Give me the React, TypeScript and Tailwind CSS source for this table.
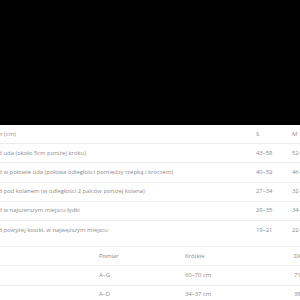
const sizeRows = [
  { label: "Obwód uda (około 5cm poniżej kroku)", s: "43–58", m: "52–64" },
  { label: "Obwód w połowie uda (połowa odległości pomiędzy rzepką i kroczem)", s: "40–52", m: "46–58" },
  { label: "Obwód pod kolanem (w odległości 2 palców poniżej kolana)", s: "27–34", m: "32–39" },
  { label: "Obwód w najszerszym miejscu łydki", s: "29–35", m: "34–40" },
  { label: "Obwód powyżej kostki, w najwęższym miejscu", s: "19–21", m: "22–24" },
];

const lengthRows = [
  { measure: "A–G", short: "60–70 cm", long: "71–81 cm" },
  { measure: "A–D", short: "34–37 cm", long: "38–42 cm" },
];

export default function App() {
  return (
    <div className="w-[300px] h-[300px] overflow-hidden bg-white text-[5.9px] text-[#8c8c8c] font-['Open_Sans',sans-serif]">
      <div className="h-[125px] bg-black" />

      <div className="ml-[-18px] w-[400px]">
        <div className="flex h-[18px] items-center">
          <div className="ml-[-2px] w-[276px] shrink-0">Rozmiar (cm)</div>
          <div className="w-[36px] shrink-0">S</div>
          <div className="w-[36px] shrink-0">M</div>
        </div>
        {sizeRows.map((r) => (
          <div key={r.label} className="flex h-[19.25px] items-center border-t border-[#ececec]">
            <div className="w-[274px] shrink-0 whitespace-nowrap">{r.label}</div>
            <div className="w-[36px] shrink-0">{r.s}</div>
            <div className="w-[36px] shrink-0">{r.m}</div>
          </div>
        ))}
      </div>

      <div className="ml-[-18px] mt-[7px] w-[400px]">
        <div className="flex h-[19px] items-center border-t border-[#ececec]">
          <div className="w-[117px] shrink-0" />
          <div className="w-[86px] shrink-0">Pomiar</div>
          <div className="w-[109px] shrink-0">Krótkie</div>
          <div className="w-[60px] shrink-0">Długie</div>
        </div>
        {lengthRows.map((r) => (
          <div key={r.measure} className="flex h-[19.25px] items-center border-t border-[#ececec]">
            <div className="w-[117px] shrink-0" />
            <div className="w-[86px] shrink-0">{r.measure}</div>
            <div className="w-[109px] shrink-0">{r.short}</div>
            <div className="w-[60px] shrink-0">{r.long}</div>
          </div>
        ))}
      </div>
    </div>
  );
}
